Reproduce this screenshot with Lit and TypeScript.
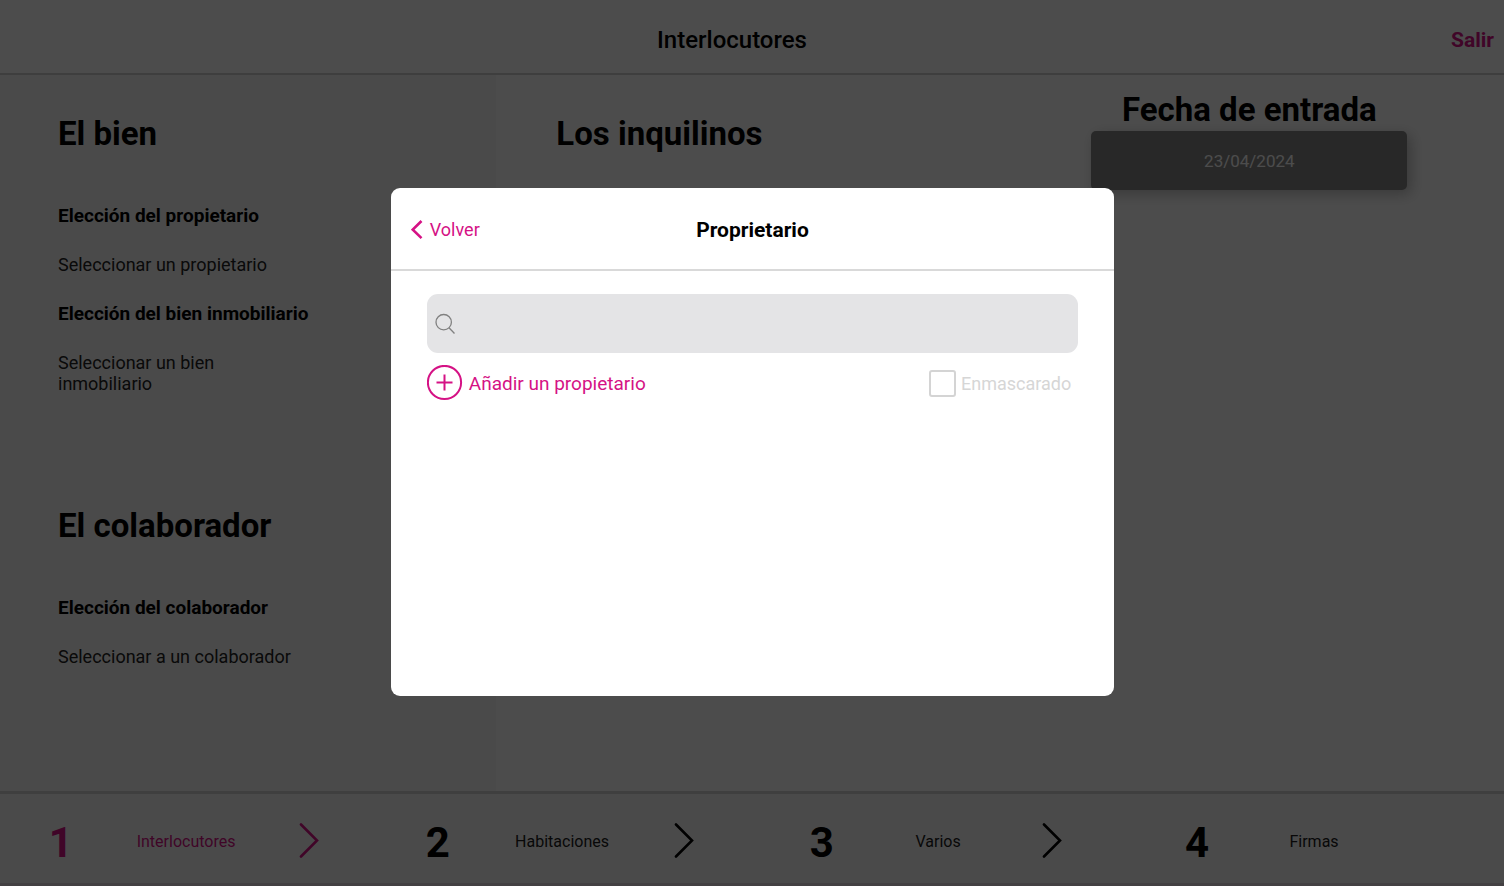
import { LitElement, html, css, svg } from "lit";
import { customElement, property, state } from "lit/decorators.js";
import { classMap } from "lit/directives/class-map.js";

interface Step {
  label: string;
}

const STEPS: Step[] = [
  { label: "Interlocutores" },
  { label: "Habitaciones" },
  { label: "Varios" },
  { label: "Firmas" },
];

/* Bottom progress bar with numbered steps. */
@customElement("step-bar")
class StepBar extends LitElement {
  @property({ type: Number }) current = 0;

  static styles = css`
    :host {
      display: block;
      background: #f8f8f8;
      border-top: 3px solid #d4d4d4;
      border-bottom: 3px solid #e0d8dc;
    }
    .steps {
      display: grid;
      grid-template-columns: repeat(4, 1fr);
      list-style: none;
      margin: 0;
      padding: 0;
    }
    .step {
      display: flex;
      align-items: center;
      justify-content: space-around;
      height: 89px;
      padding: 4px 25px 0 17px;
      box-sizing: border-box;
      color: #000;
      text-decoration: none;
    }
    .active {
      color: #d51285;
    }
    .number {
      font-size: 42px;
      line-height: 48px;
      font-weight: 700;
      padding-top: 4px;
    }
    .label {
      font-size: 16px;
      line-height: 20px;
      padding-top: 2px;
    }
    .step:not(.active) .label {
      color: #1c1c1c;
    }
    .chevron {
      width: 20px;
      height: 36px;
      fill: none;
      stroke: currentColor;
      stroke-width: 2.6;
      stroke-linecap: round;
      stroke-linejoin: miter;
    }
    .hidden {
      visibility: hidden;
    }
  `;

  render() {
    return html`<nav aria-label="Pasos">
      <ol class="steps">
        ${STEPS.map(
          (s, i) => html`<li>
            <a class=${classMap({ step: true, active: i === this.current })} href="#paso-${i + 1}">
              <span class="number">${i + 1}</span>
              <span class="label">${s.label}</span>
              <svg
                class=${classMap({ chevron: true, hidden: i === STEPS.length - 1 })}
                viewBox="0 0 20 36"
                aria-hidden="true"
              >
                ${svg`<path d="M2 1.500L18 17.500L2 33.500"/>`}
              </svg>
            </a>
          </li>`
        )}
      </ol>
    </nav>`;
  }
}

/* Dialog used to search for, add or pick an owner. */
@customElement("owner-dialog")
class OwnerDialog extends LitElement {
  @state() private query = "";

  static styles = css`
    :host {
      position: fixed;
      inset: 0;
      display: flex;
      align-items: center;
      justify-content: center;
      background: rgba(0, 0, 0, 0.7);
    }
    button,
    input {
      font: inherit;
      color: inherit;
      margin: 0;
    }
    button {
      border: 0;
      padding: 0;
      background: none;
      cursor: pointer;
    }
    .card {
      box-sizing: border-box;
      width: 48.1%;
      min-height: 508px;
      margin: 0 0 2px 1px;
      background: #fff;
      border-radius: 9px;
    }
    .head {
      display: grid;
      grid-template-columns: 1fr auto 1fr;
      align-items: center;
      height: 83px;
      padding: 2px 20px 0;
      box-sizing: border-box;
      border-bottom: 2px solid #d9d9d9;
    }
    .back {
      display: flex;
      align-items: center;
      gap: 7px;
      justify-self: start;
      color: #d51285;
      font-size: 18px;
      line-height: 24px;
    }
    .back-icon {
      width: 12px;
      height: 20px;
      fill: none;
      stroke: currentColor;
      stroke-width: 2.6;
    }
    .title {
      margin: 0;
      font-size: 21px;
      line-height: 24px;
      font-weight: 700;
    }
    .body {
      padding: 23px 36px;
    }
    .search {
      display: flex;
      align-items: center;
      gap: 8px;
      height: 59px;
      padding: 0 8px;
      border-radius: 11px;
      background: #e4e4e6;
    }
    .search-icon {
      width: 21px;
      height: 21px;
      fill: none;
      stroke: #808080;
      stroke-width: 1.3;
    }
    .field {
      flex: 1;
      min-width: 0;
      border: 0;
      outline: 0;
      background: none;
      font-size: 18px;
    }
    .actions {
      display: flex;
      align-items: center;
      justify-content: space-between;
      padding: 12px 7px 0 0;
    }
    .add,
    .masked {
      display: flex;
      align-items: center;
      line-height: 24px;
    }
    .add {
      gap: 6px;
      color: #d51285;
      font-size: 19px;
    }
    .add-icon {
      width: 36px;
      height: 36px;
      fill: none;
      stroke: currentColor;
      stroke-width: 2;
    }
    .masked {
      gap: 5px;
      color: #d6d6d6;
      font-size: 18px;
    }
    .text {
      padding-top: 2px;
    }
    .box {
      appearance: none;
      box-sizing: border-box;
      width: 27px;
      height: 27px;
      border: 2px solid #d4d4d4;
      border-radius: 3px;
      background: #fff;
    }
    .box:checked {
      background: #d4d4d4;
    }
  `;

  render() {
    return html`<section class="card" role="dialog" aria-modal="true" aria-labelledby="title">
      <header class="head">
        <button class="back" type="button">
          <svg class="back-icon" viewBox="0 0 12 20" aria-hidden="true">
            <path d="M10.500 1L1.800 9.600L10.500 18.200" />
          </svg>
          <span>Volver</span>
        </button>
        <h2 class="title" id="title">Proprietario</h2>
      </header>
      <div class="body">
        <label class="search">
          <svg class="search-icon" viewBox="0 0 21 21" aria-hidden="true">
            <circle cx="8.700" cy="9.200" r="7.700" />
            <path d="M14 14.700L19.500 20.500" />
          </svg>
          <input
            class="field"
            type="search"
            aria-label="Buscar"
            .value=${this.query}
            @input=${(e: Event) => (this.query = (e.target as HTMLInputElement).value)}
          />
        </label>
        <div class="actions">
          <button class="add" type="button">
            <svg class="add-icon" viewBox="0 0 36 36" aria-hidden="true">
              <circle cx="17.500" cy="17.500" r="16.600" />
              <path d="M9.500 17.500H25.500M17.500 9.500V25.500" />
            </svg>
            <span class="text">Añadir un propietario</span>
          </button>
          <label class="masked">
            <input class="box" type="checkbox" />
            <span class="text">Enmascarado</span>
          </label>
        </div>
      </div>
    </section>`;
  }
}

@customElement("app-root")
class AppRoot extends LitElement {
  static styles = css`
    :host {
      display: flex;
      flex-direction: column;
      min-height: 100vh;
      background: #fff;
      color: #000;
      font-family: Roboto, "Liberation Sans", sans-serif;
    }
    button {
      font: inherit;
      border: 0;
      margin: 0;
      cursor: pointer;
    }
    .top {
      display: flex;
      align-items: center;
      height: 75px;
      padding: 7px 10px 0 13px;
      box-sizing: border-box;
      border-bottom: 2px solid #d0d0d0;
    }
    .title {
      flex: 1;
      margin: 0;
      text-align: center;
      font-size: 24px;
      line-height: 28px;
      font-weight: 500;
    }
    .exit {
      padding: 0;
      background: none;
      color: #d51285;
      font-size: 21px;
      line-height: 24px;
      font-weight: 700;
    }
    .main {
      flex: 1;
      display: grid;
      grid-template-columns: 33fr 33fr 34fr;
    }
    .side {
      background: #f8f8f8;
      padding: 39px 58px 0;
    }
    .tenants {
      padding: 39px 60px 0;
    }
    .date {
      display: flex;
      flex-direction: column;
      align-items: center;
      padding: 15px 0 0 2px;
    }
    .block {
      min-height: 392px;
    }
    .heading {
      margin: 0;
      font-size: 33px;
      line-height: 40px;
      font-weight: 700;
    }
    .fields {
      margin: 51px 0 0;
      font-size: 19px;
      line-height: 21px;
    }
    .name {
      font-weight: 700;
    }
    .value {
      margin: 28px 0;
      max-width: 240px;
      color: #222;
      font-size: 18px;
    }
    .pick {
      width: 62%;
      height: 59px;
      margin-top: 1px;
      border-radius: 5px;
      background: #868686;
      color: #fff;
      font-size: 17px;
      box-shadow: 4px 4px 14px rgba(0, 0, 0, 0.25);
    }
  `;

  render() {
    return html`
      <header class="top">
        <h1 class="title">Interlocutores</h1>
        <button class="exit" type="button">Salir</button>
      </header>
      <main class="main">
        <div class="side">
          <section class="block">
            <h2 class="heading">El bien</h2>
            <dl class="fields">
              <dt class="name">Elección del propietario</dt>
              <dd class="value">Seleccionar un propietario</dd>
              <dt class="name">Elección del bien inmobiliario</dt>
              <dd class="value">Seleccionar un bien inmobiliario</dd>
            </dl>
          </section>
          <section>
            <h2 class="heading">El colaborador</h2>
            <dl class="fields">
              <dt class="name">Elección del colaborador</dt>
              <dd class="value">Seleccionar a un colaborador</dd>
            </dl>
          </section>
        </div>
        <section class="tenants">
          <h2 class="heading">Los inquilinos</h2>
        </section>
        <section class="date">
          <h2 class="heading">Fecha de entrada</h2>
          <button class="pick" type="button">23/04/2024</button>
        </section>
      </main>
      <step-bar .current=${0}></step-bar>
      <owner-dialog></owner-dialog>
    `;
  }
}
